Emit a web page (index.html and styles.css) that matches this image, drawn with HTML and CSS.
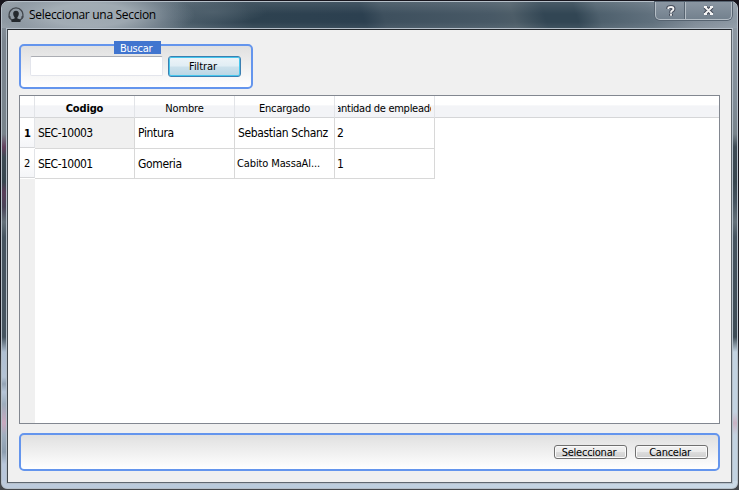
FILE: index.html
```html
<!DOCTYPE html>
<html lang="es">
<head>
<meta charset="utf-8">
<title>Seleccionar una Seccion</title>
<link rel="stylesheet" href="styles.css">
</head>
<body>
<div class="window">
  <header class="titlebar">
    <svg class="app-icon" width="16" height="16" viewBox="0 0 16 16">
      <path d="M4.5 13.7A6.8 6.8 0 0 1 2.6 3.5A7 7 0 0 1 13.4 3.5A6.8 6.8 0 0 1 11.5 13.7" fill="none" stroke="#42474d" stroke-width="1.3"/>
      <path d="M0 9.5h3L1.5 12zM13 9.5h3L14.5 12z" fill="#42474d"/>
      <path d="M8 3.7C5.8 3.7 5 5.2 5.2 7C5.3 8.5 6 9.6 6.6 10.2V11.4L3.5 12.5V15H12.5V12.5L9.4 11.4V10.2C10 9.6 10.7 8.5 10.8 7C11 5.2 10.2 3.7 8 3.7Z" fill="#24292e"/>
    </svg>
    <h1 class="title">Seleccionar una Seccion</h1>
    <div class="controls">
      <span class="control help"><svg width="10" height="12" viewBox="0 0 10 12"><path d="M2.3 4V3.2Q2.5 2 5 2Q7.5 2 7.5 4Q7.5 5.2 6 5.8Q5 6.3 5 7.7M5 8.8V10.8" class="glyph-edge"/><path d="M2.3 4V3.2Q2.5 2 5 2Q7.5 2 7.5 4Q7.5 5.2 6 5.8Q5 6.3 5 7.7M5 8.8V10.8" class="glyph"/></svg></span>
      <span class="control close"><svg width="13" height="12" viewBox="0 0 13 12"><path d="M3 2L10 9M10 2L3 9" class="glyph-edge"/><path d="M3 2L10 9M10 2L3 9M2 2H5M8 2H11M2 9H5M8 9H11" class="glyph"/></svg></span>
    </div>
  </header>
  <main class="client">
    <section class="search">
      <h2 class="legend">Buscar</h2>
      <input class="field" type="text" aria-label="Buscar">
      <button class="button primary">Filtrar</button>
    </section>
    <div class="grid">
      <div class="row head">
        <div class="num"></div>
        <div class="cell strong">Codigo</div><div class="cell">Nombre</div><div class="cell enc">Encargado</div><div class="cell clipped"><span>Cantidad de empleados</span></div><div class="rest"></div>
      </div>
      <div class="row first">
        <div class="num strong">1</div>
        <div class="cell code current">SEC-10003</div><div class="cell">Pintura</div><div class="cell person">Sebastian Schanz</div><div class="cell count">2</div>
      </div>
      <div class="row">
        <div class="num">2</div>
        <div class="cell code">SEC-10001</div><div class="cell">Gomeria</div><div class="cell tight">Cabito MassaAl...</div><div class="cell count">1</div>
      </div>
      <div class="gutter"></div>
    </div>
    <footer class="actions">
      <button class="button small">Seleccionar</button>
      <button class="button small">Cancelar</button>
    </footer>
  </main>
</div>
</body>
</html>
```
FILE: styles.css
```css
* { box-sizing: border-box; }
body {
  margin: 0;
  width: 739px;
  height: 490px;
  padding: 1px 1px 1px;
  overflow: hidden;
  background: linear-gradient(#17151d 0 340px, #45484c 370px);
  font: 11px/14px "DejaVu Sans Condensed", "DejaVu Sans", sans-serif;
  font-stretch: condensed;
  color: #000;
}
.window {
  height: 488px;
  padding: 0 5px 5px;
  border: 1px solid #b5bfc8;
  border-radius: 7px 7px 6px 6px;
  background:
    linear-gradient(90deg, #bdcbdc, #b9cadb 30%, #cbdae7) 0 100% / 100% 7px no-repeat,
    linear-gradient(#929ca6, #808c97 100px, #78838b 132px, #3e4b55 145px, #38464f 180px, #465460 200px, #65717a 220px, #465460 235px, #3e4c56 335px, #c3d3e1 350px, #c3d3e1 410px, #c9b3c4 421px, #c3d3e1 433px) 100% 0 / 8px 100% no-repeat,
    linear-gradient(#929ca6, #7b858f 40px, #7a858e 100px, #78838b 132px, #65425f 145px, #3e4b55 155px, #38464f 180px, #593e59 190px, #4a4559 205px, #65717a 220px, #465460 235px, #465460 335px, #afbfd2 350px, #b4c3d5 375px, #94a4b5 382px, #b6c5d8 390px, #9dadbd 402px, #c9a9bf 421px, #a0afc0 433px, #8d9eb0 450px, #b9c7db 462px, #b9c7db);
}
.titlebar {
  display: flex;
  height: 26px;
  margin: 0 -5px;
  padding: 0 5px 0 6px;
  border-radius: 6px 6px 0 0;
  background:
    radial-gradient(ellipse 105px 28px at 88px 13px, #aab4bccc 40%, #8c98a377 75%, transparent),
    radial-gradient(ellipse 55px 12px at 210px 10px, #52636fcc, transparent),
    linear-gradient(180deg, #ffffff1c, transparent 12px, transparent 20px, #ffffff12),
    linear-gradient(72deg, #929ca5 0, #77838d 90px, #4c5e6b 170px, #2e4250 240px, #2c4050 347px, #3e505e 367px, #485966 470px, #4d5d68 490px, #324654 520px, #324654 550px, #4e606d 572px, #60707d 620px, #7f8b97 660px, #8f9ba6);
}
.app-icon { margin-top: 5px; }
.title {
  margin: 5px 0 0 5px;
  font: 12px/16px "Open Sans", "Noto Sans", sans-serif;
  letter-spacing: -.3px;
}
.controls {
  display: flex;
  width: 77px;
  height: 18px;
  margin-left: auto;
  border: 1px solid #b5bec6;
  border-top: 0;
  border-radius: 0 0 5px 5px;
  box-shadow: 0 0 0 1px #566370;
  background: linear-gradient(#8a96a2, #73818e);
}
.control { display: grid; place-items: center; }
.help { width: 30px; border-right: 1px solid #b5bec6; box-shadow: inset -1px 0 #566370; }
.close { flex: 1; }
.glyph-edge, .glyph { fill: none; stroke: #474d5b; stroke-width: 4; }
.glyph { stroke: #f5f5f5; stroke-width: 1.8; }
.client {
  width: 725px;
  height: 454px;
  margin-top: 1px;
  padding: 14px 11px 0 11px;
  border: 1px solid #33383d;
  border-color: #22272c #5b6269 #5f6871 #41474d;
  outline: 1px solid #b6c0ca;
  background: #f0f0f0;
}
.search {
  display: flex;
  position: relative;
  gap: 5px;
  width: 234px;
  height: 45px;
  padding: 10px 9px;
  border: 2px solid #6495ed;
  border-radius: 5px;
  background: linear-gradient(#e0e0e0, #fff);
}
.legend {
  position: absolute;
  left: 93px;
  top: -5px;
  width: 47px;
  height: 13px;
  margin: 0;
  padding-left: 6px;
  background: #4175cf;
  color: #fff;
  font: inherit;
  line-height: 15px;
  letter-spacing: -.25px;
}
.field {
  width: 133px;
  height: 20px;
  border: 1px solid #e3e5ec;
  border-top-color: #abadb3;
  border-radius: 2px;
  background: #fff;
}
.button {
  padding: 0;
  border: 1px solid #707070;
  border-radius: 3px;
  background: linear-gradient(#f2f2f2, #ebebeb 49%, #dcdcdc 51%, #cfcfcf);
  box-shadow: inset 0 0 0 1px #fafafa;
  font: inherit;
  color: #000;
}
.primary {
  width: 73px;
  height: 21px;
  border-color: #3c7fb1;
  padding: 1px 3px 0 0;
  background: linear-gradient(#eef4f8, #e0edf4 49%, #cce1ec 51%, #b9d6e4);
  box-shadow: inset 0 0 0 1px #46c7ed;
  letter-spacing: -.1px;
}
.grid {
  height: 329px;
  margin-top: 6px;
  border: 1px solid #828790;
  background: #fff;
  display: flex;
  flex-direction: column;
}
.row { display: flex; height: 30px; line-height: 30px; font-size: 12px; }
.first { height: 31px; line-height: 31px; }
.num {
  width: 15px;
  padding-left: 4px;
  font-size: 11px;
  border-right: 1px solid #e2e4e8;
  border-bottom: 1px solid #d5d6d8;
  background: linear-gradient(#fff 35%, #f4f5f8);
}
.cell {
  width: 100px;
  padding-left: 3px;
  overflow: hidden;
  white-space: nowrap;
  letter-spacing: -.35px;
  border-right: 1px solid #d8d8d8;
  border-bottom: 1px solid #d8d8d8;
}
.row:not(.head) .num { margin-bottom: 1px; }
.head { height: 22px; line-height: 25px; font-size: 11px; background: linear-gradient(#fff 40%, #f3f4f7 45%); }
.head .num { background: none; }
.head .cell { padding-left: 0; text-align: center; letter-spacing: -.15px; border-right-color: #e2e4e8; border-bottom-color: #d5d6d8; }
.head .clipped { display: flex; justify-content: center; padding: 0 3px; }
.clipped span { flex: none; width: 93px; display: flex; justify-content: center; overflow: hidden; letter-spacing: -.28px; }
.rest { flex: 1; border-bottom: 1px solid #d5d6d8; }
.strong { font-weight: bold; }
.current { background: #f0f0f0; }
.cell.code { letter-spacing: -.53px; }
.cell.tight { padding-left: 2px; font-size: 11px; letter-spacing: -.12px; }
.count { padding-left: 2px; }
.gutter { flex: 1; width: 15px; background: #f0f0f0; }
.actions {
  display: flex;
  justify-content: flex-end;
  gap: 8px;
  height: 38px;
  margin-top: 9px;
  padding: 10px 10px 0;
  border: 2px solid #6495ed;
  border-radius: 5px;
  background: linear-gradient(#e0e0e0, #fff);
}
.small { width: 73px; height: 14px; line-height: 12px; padding: 1px 3px 0 0; letter-spacing: -.25px; }
```
